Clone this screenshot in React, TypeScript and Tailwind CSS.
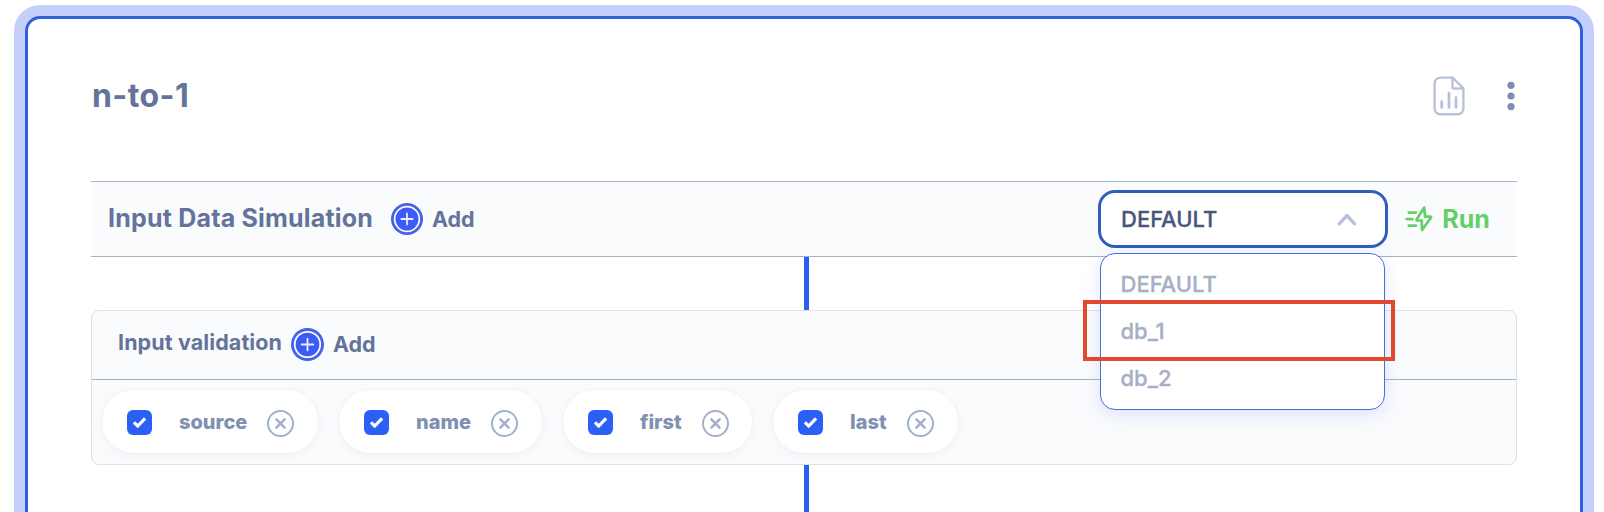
import React from "react";

function PlusBadge({ size }: { size: number }) {
  return (
    <svg width={size} height={size} viewBox="0 0 32 32" fill="none" className="shrink-0">
      <circle cx="16" cy="16" r="16" fill="#4461e8" />
      <circle cx="16" cy="16" r="13.2" fill="#fff" />
      <circle cx="16" cy="16" r="11.5" fill="#3d5cf5" />
      <path d="M16 10.4v11.2M10.4 16h11.2" stroke="#e9edff" strokeWidth="1.8" strokeLinecap="round" />
    </svg>
  );
}

function ReportIcon() {
  return (
    <svg width="32" height="40" viewBox="0 0 32 40" fill="none" stroke="#b8c2d9" strokeWidth="2.4" strokeLinecap="round" strokeLinejoin="round">
      <path d="M19.6 1.6H7.2a5.6 5.6 0 0 0-5.6 5.6v25.4a5.6 5.6 0 0 0 5.6 5.6h17.6a5.6 5.6 0 0 0 5.6-5.6V12.4Z" />
      <path d="M19.4 1.8v9.2a1.5 1.5 0 0 0 1.5 1.5h9.2" />
      <path d="M8.7 25.4v6M16 17.2v14.2M23 21.7v9.7" strokeWidth="2.8" />
    </svg>
  );
}

function DotsIcon() {
  return (
    <svg width="8" height="30" viewBox="0 0 8 30" fill="#7b8fb2">
      <circle cx="4" cy="4.3" r="3.6" />
      <circle cx="4" cy="15" r="3.6" />
      <circle cx="4" cy="25.6" r="3.6" />
    </svg>
  );
}

function RunIcon() {
  return (
    <svg width="28" height="26" viewBox="0 0 28 26" fill="none" stroke="#65ce69" strokeWidth="2.7" strokeLinecap="round" strokeLinejoin="round">
      <path d="M19.2 1.6 11.6 13.4c-.3.6 0 1.1.6 1.1h4.5l.3 9.4 8.9-12.1c.4-.6.1-1.1-.6-1.1h-5.3Z" />
      <path d="M3.8 6.6h7M1.6 13.1h6M3.8 19.7h7" />
    </svg>
  );
}

function CheckBox() {
  return (
    <span className="mt-[1px] flex h-[25px] w-[25px] shrink-0 items-center justify-center rounded-[6px] bg-[#2a60f5]">
      <svg width="15" height="13" viewBox="0 0 15 13" fill="none" stroke="#fff" strokeWidth="3.2">
        <path d="M1.9 6.4 5.7 10 13.1 2.4" />
      </svg>
    </span>
  );
}

function RemoveIcon() {
  return (
    <svg width="27" height="27" viewBox="0 0 27 27" fill="none" stroke="#a3b0c9" className="mt-[3px] shrink-0">
      <circle cx="13.5" cy="13.5" r="12.5" strokeWidth="2" />
      <path d="m9.4 9.4 8.2 8.2m0-8.2-8.2 8.2" strokeWidth="2.5" strokeLinecap="round" />
    </svg>
  );
}

function Chip({ label, width, textWidth }: { label: string; width: string; textWidth: string }) {
  return (
    <div className={`flex h-[65px] items-center rounded-full border border-[#f1f2f5] bg-white pl-[25px] shadow-[0_3px_8px_rgba(80,90,120,0.05)] ${width}`}>
      <CheckBox />
      <span className={`ml-[27px] mr-[21px] whitespace-nowrap text-[20px] leading-6 font-extrabold text-[#8090b0] ${textWidth}`}>{label}</span>
      <RemoveIcon />
    </div>
  );
}

function AddButton({ size }: { size: number }) {
  return (
    <button className="flex items-center gap-[9px] text-[21.5px] leading-7 font-bold text-[#64739a]">
      <PlusBadge size={size} />
      <span>Add</span>
    </button>
  );
}

export default function App() {
  return (
    <div className="h-[512px] overflow-hidden bg-white pt-4 pr-[21px] pl-[25px] font-['Inter',sans-serif]">
      <main className="h-[540px] rounded-[15px] border-[3px] border-[#305fdc] bg-white pr-[63px] pl-[63px] shadow-[0_0_0_11px_#c5cffc]">
        <header className="flex h-[162px] items-start justify-between">
          <h1 className="mt-[57px] ml-[1px] text-[32px] leading-10 font-bold tracking-[0.4px] text-[#64739a]">n-to-1</h1>
          <div className="mt-[57px] mr-[2.5px] flex items-center gap-[42px]">
            <ReportIcon />
            <DotsIcon />
          </div>
        </header>

        <section className="flex h-[76px] items-center justify-between border-y border-[#a6b1c8] bg-[#fafbfd] pr-[27px] pl-4">
          <div className="flex items-center">
            <h2 className="w-[284px] whitespace-nowrap pb-[2px] pl-[1px] text-[25px] leading-8 font-bold tracking-[0.2px] text-[#64739a]">Input Data Simulation</h2>
            <AddButton size={32} />
          </div>
          <div className="flex items-center">
            <div className="relative">
              <button className="flex h-[58px] w-[290px] items-center justify-between rounded-[17px] border-[3.5px] border-[#305fb9] bg-white pr-[28px] pl-5 text-[22px] font-medium text-[#48557d]">
                <span className="[-webkit-text-stroke:0.3px_currentColor]">DEFAULT</span>
                <svg width="20" height="13" viewBox="0 0 20 13" fill="none" stroke="#bac3da" strokeWidth="3.4" strokeLinecap="round" strokeLinejoin="round">
                  <path d="m2.2 10.8 7.7-8.3 7.7 8.3" />
                </svg>
              </button>
              <ul className="absolute top-[63px] left-[2px] z-10 h-[157px] w-[285px] rounded-[15px] border border-[#4570d8] bg-white pt-[7px] pl-[19.5px] text-[22px] leading-[47px] font-medium text-[#a6afc6] shadow-[0_4px_18px_rgba(60,100,240,0.16)] [-webkit-text-stroke:0.3px_currentColor]">
                <li>DEFAULT</li>
                <li>db_1</li>
                <li>db_2</li>
              </ul>
              <div className="absolute top-[110px] left-[-15px] z-20 h-[61px] w-[312px] border-4 border-[#e04830]" />
            </div>
            <button className="ml-[17px] flex items-center gap-[9px] text-[25px] leading-8 font-bold text-[#65ce69]">
              <RunIcon />
              <span className="w-[48px]">Run</span>
            </button>
          </div>
        </section>

        <div className="ml-[713px] h-[53px] w-[5px] bg-[#2b60ee]" />

        <section className="h-[155px] rounded-[8px] border border-[#dfe1e5] bg-[#fafbfd]">
          <div className="flex h-[69px] items-center border-b border-[#a6b1c8] pb-[2px] pl-[26px]">
            <h3 className="w-[173px] whitespace-nowrap pb-1 text-[21.5px] leading-7 font-bold tracking-[0.1px] text-[#64739a]">Input validation</h3>
            <AddButton size={33} />
          </div>
          <div className="flex gap-[19px] pt-[9px] pl-[9px]">
            <Chip label="source" width="w-[218px]" textWidth="w-[67px]" />
            <Chip label="name" width="w-[205px]" textWidth="w-[54px]" />
            <Chip label="first" width="w-[191px]" textWidth="w-[41px]" />
            <Chip label="last" width="w-[187px]" textWidth="w-[36px]" />
          </div>
        </section>

        <div className="ml-[713px] h-[60px] w-[5px] bg-[#2b60ee]" />
      </main>
    </div>
  );
}
